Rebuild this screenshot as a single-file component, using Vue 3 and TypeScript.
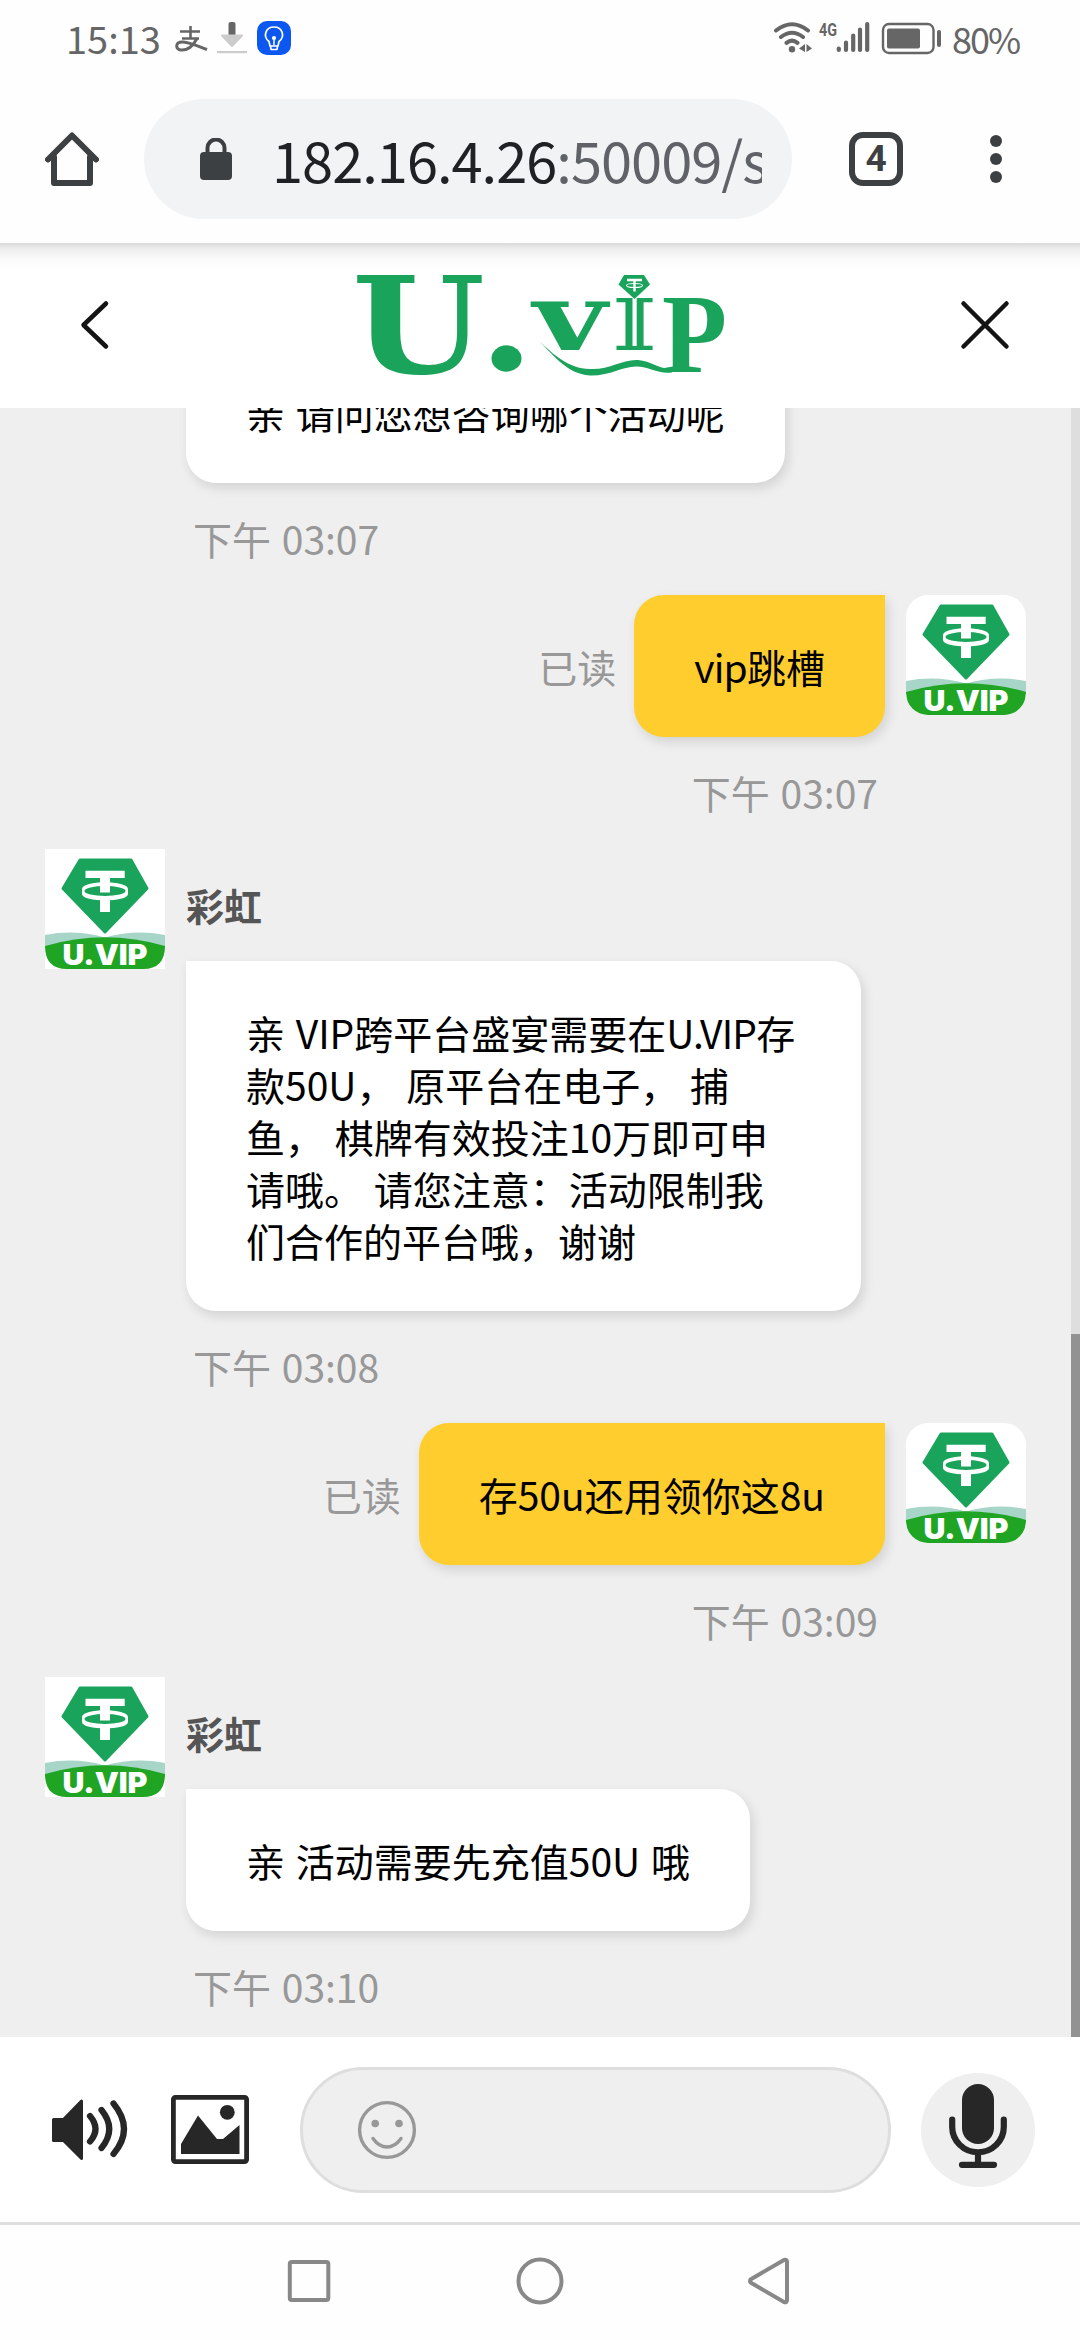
<script setup lang="ts">
interface Message {
  id: number
  mine: boolean
  name?: string
  lines: string[]
  time: string
}

const messages: Message[] = [
  { id: 1, mine: false, lines: ['亲 请问您想咨询哪个活动呢'], time: '下午 03:07' },
  { id: 2, mine: true, lines: ['vip跳槽'], time: '下午 03:07' },
  {
    id: 3,
    mine: false,
    name: '彩虹',
    lines: [
      '亲 VIP跨平台盛宴需要在U.VIP存',
      '款50U， 原平台在电子， 捕',
      '鱼， 棋牌有效投注10万即可申',
      '请哦。 请您注意：活动限制我',
      '们合作的平台哦，谢谢',
    ],
    time: '下午 03:08',
  },
  { id: 4, mine: true, lines: ['存50u还用领你这8u'], time: '下午 03:09' },
  { id: 5, mine: false, name: '彩虹', lines: ['亲 活动需要先充值50U 哦'], time: '下午 03:10' },
]

// Brand names are set tighter than the surrounding text.
const brand = /(U\.VIP|vip)/
const segments = (line: string): string[] => line.split(brand).filter(Boolean)
</script>

<template>
  <div class="screen">
    <svg class="defs" width="0" height="0" aria-hidden="true">
      <symbol id="avatar" viewBox="0 0 120 120">
        <rect width="120" height="120" fill="#fff" />
        <path d="M35 11H86L102 39.500L60 83L18 39.500Z" fill="#1aa35a" stroke="#1aa35a" stroke-width="3" stroke-linejoin="round" />
        <path d="M37 40C37 31 83 31 83 40V45C83 53.500 37 53.500 37 45Z" fill="#fff" />
        <ellipse cx="60" cy="42" rx="20.500" ry="5" fill="#1aa35a" />
        <path d="M40.500 21.700H79.700V29H65V43.500H55V29H40.500Z" fill="#fff" />
        <rect x="55" y="50" width="10" height="13" fill="#fff" />
        <path d="M0 86Q30 80 60 88.500Q90 80 120 86V99H0Z" fill="#a7d6c8" />
        <path d="M0 97Q60 79.500 120 97Q120 120 98 120H22Q0 120 0 97Z" fill="#1fa423" />
        <text x="17.500" y="115.500" class="avatar-word" textLength="85" lengthAdjust="spacingAndGlyphs">U.VIP</text>
      </symbol>
    </svg>

    <div class="status">
      <span class="clock">15:13</span>
      <svg class="pay" viewBox="175 25 33 28" width="33" height="28" fill="none" stroke="#666">
        <path d="M180 31.500H200M190.500 26V38M182 38.500H199" stroke-width="2.600" />
        <path d="M197 38.500C193 46 187 50.500 181 50C175 49.500 175 41.500 183 42C190 42.500 199 46.500 207 49.500" stroke-width="3" />
      </svg>
      <svg class="download" viewBox="216 21 32 33" width="32" height="33">
        <rect x="228.500" y="22" width="7" height="14" rx="2" fill="#666" />
        <path d="M222 35.500H242L232 46Z" fill="#ccc" stroke="#ccc" stroke-width="2" stroke-linejoin="round" />
        <rect x="217" y="51" width="30" height="2.200" fill="#ccc" />
      </svg>
      <svg class="bulb" viewBox="0 0 34 34" width="34" height="34">
        <rect width="34" height="34" rx="10" fill="#0b57f0" />
        <path d="M12 20.500C5.500 15.500 8.500 6 17 6S28.500 15.500 22 20.500L21 25H13ZM13.500 25L14 28.500H20L20.500 25" fill="none" stroke="#fff" stroke-width="1.700" stroke-linejoin="round" />
        <circle cx="17" cy="17" r="2.100" fill="#fff" /><path d="M17 17V24.500" stroke="#fff" stroke-width="1.500" />
      </svg>
      <span class="spring"></span>
      <svg class="signals" viewBox="773 20 170 36" width="170" height="36">
        <g fill="none" stroke="#666" stroke-width="4" stroke-linecap="round">
          <path d="M776 30.500Q792 18 808 30.500M781 37Q792 28.500 803 37M786.500 42.800Q792 38.500 797.500 42.800" />
        </g>
        <circle cx="792" cy="49.300" r="3.200" fill="#666" />
        <path d="M799 48.500L805 44V52ZM812 48.500L806.500 44V52Z" fill="#666" />
        <text x="819" y="35.500" class="net" textLength="18" lengthAdjust="spacingAndGlyphs">4G</text>
        <g stroke="#666" stroke-width="4.200" stroke-linecap="round">
          <path d="M838.800 48.500V50M846 42.500V50M853.200 35.500V50M860 29.500V50M867.200 24V50" />
        </g>
        <rect x="883" y="24" width="50.500" height="29" rx="6" fill="none" stroke="#666" stroke-width="2.400" />
        <rect x="887" y="28.500" width="33" height="20" rx="2" fill="#666" />
        <rect x="937" y="30" width="4" height="17" rx="2" fill="#666" />
      </svg>
      <span class="percent">80%</span>
    </div>

    <div class="toolbar">
      <svg class="home" viewBox="45 131 54 56" width="54" height="56" fill="none" stroke="#3c4043" stroke-width="6" stroke-linejoin="round" stroke-linecap="round">
        <path d="M48 159.500L72 135.500L96 159.500" /><path d="M54 157V183H90V157" />
      </svg>
      <div class="omnibox">
        <svg class="lock" viewBox="200 137 32 43" width="32" height="43">
          <rect x="200" y="151" width="32" height="28" rx="4" fill="#3c4043" />
          <path d="M207.500 152V147A8.500 8.500 0 0 1 224.500 147V152" fill="none" stroke="#3c4043" stroke-width="4" />
        </svg>
        <span class="url">182.16.4.26<span class="rest">:50009/s</span></span>
      </div>
      <div class="tabs">4</div>
      <div class="dots"><i></i><i></i><i></i></div>
    </div>

    <header class="header">
      <svg class="back" viewBox="80 300 30 50" width="30" height="50" fill="none" stroke="#141414" stroke-width="4.500" stroke-linecap="round" stroke-linejoin="round">
        <path d="M106 303.500L83.500 325L106 346.500" />
      </svg>
      <svg class="logo" viewBox="350 270 380 110" width="380" height="110" fill="#1aa35a">
        <text x="352" y="373" class="logo-u" textLength="133" lengthAdjust="spacingAndGlyphs">U</text>
        <ellipse cx="506.500" cy="358.500" rx="15" ry="13.200" />
        <text x="533" y="349.500" class="logo-v" textLength="74" lengthAdjust="spacingAndGlyphs">v</text>
        <text x="612" y="349.500" class="logo-i" textLength="45" lengthAdjust="spacingAndGlyphs">I</text>
        <rect x="632.500" y="298" width="4.200" height="48" fill="#fff" />
        <path d="M624 275H644L650 284.500L634.500 299L618.500 284.500Z" />
        <path d="M627 280H642M634.500 280V291.500" stroke="#fff" stroke-width="2.400" fill="none" />
        <ellipse cx="634.500" cy="285.500" rx="8" ry="2" fill="none" stroke="#fff" stroke-width="1.100" />
        <text x="662" y="372" class="logo-p" textLength="65" lengthAdjust="spacingAndGlyphs">P</text>
        <path d="M537 339C552 353 568 369 590 369C610 370 622 359 638 360C652 361 660 370 672 368.500V372.500C658 374.500 650 366.500 636 366.500C622 366.500 610 376 590 375.500C566 374 552 353 537 339Z" />
      </svg>
      <svg class="close" viewBox="960 300 50 50" width="50" height="50" stroke="#141414" stroke-width="4.500" stroke-linecap="round">
        <path d="M963.500 303.500L1006.500 346.500M1006.500 303.500L963.500 346.500" />
      </svg>
    </header>

    <main class="chat">
      <div class="thread">
        <section v-for="m in messages" :key="m.id" class="message" :class="{ mine: m.mine }">
          <div class="row">
            <svg v-if="m.mine || m.name" class="avatar" width="120" height="120"><use href="#avatar" /></svg>
            <div v-else class="avatar"></div>
            <div class="body">
              <div v-if="m.name" class="name">{{ m.name }}</div>
              <div class="bubble" :class="{ long: m.lines.length > 1 }">
                <p v-for="line in m.lines" :key="line"><span v-for="(s, i) in segments(line)" :key="i" :class="{ brand: brand.test(s) }">{{ s }}</span></p>
              </div>
            </div>
            <span v-if="m.mine" class="read">已读</span>
          </div>
          <div class="time">{{ m.time }}</div>
        </section>
      </div>
      <div class="track"><div class="thumb"></div></div>
    </main>

    <footer class="composer">
      <svg class="speaker" viewBox="51 2098 78 66" width="78" height="66">
        <path d="M53.500 2120.500H63.500L81.500 2102V2159.500L63.500 2141.500H53.500Z" fill="#272727" stroke="#272727" stroke-width="3" stroke-linejoin="round" />
        <path d="M90 2117Q101 2130 90 2142.500M101.500 2111Q117 2130 101.500 2149M113.500 2104.500Q134.500 2130 113.500 2155" fill="none" stroke="#272727" stroke-width="6.200" stroke-linecap="round" />
      </svg>
      <svg class="picture" viewBox="171 2095 78 69" width="78" height="69">
        <rect x="173.400" y="2097.400" width="73.200" height="64.200" rx="2" fill="none" stroke="#272727" stroke-width="4.800" />
        <circle cx="227.300" cy="2112.300" r="7.400" fill="#272727" />
        <path d="M181 2154V2144L198 2115.500L217 2139H223L239.500 2125V2154Z" fill="#272727" />
      </svg>
      <div class="input">
        <svg viewBox="357 2099 60 60" width="60" height="60" fill="none" stroke="#989898">
          <circle cx="387" cy="2129" r="27.400" stroke-width="3.400" />
          <path d="M373 2137.500Q379 2146 387 2146T401 2137.500" stroke-width="3.400" stroke-linecap="round" />
          <circle cx="375.200" cy="2122.500" r="3.800" fill="#989898" stroke="none" /><circle cx="399" cy="2122.500" r="3.800" fill="#989898" stroke="none" />
        </svg>
      </div>
      <div class="mic">
        <svg viewBox="948 2083 60 86" width="60" height="86">
          <rect x="962" y="2084" width="32" height="60" rx="16" fill="#272727" />
          <path d="M952.200 2119.500V2127A25.800 25.300 0 0 0 1003.800 2127V2119.500M978 2153V2164M962 2164.800H994" fill="none" stroke="#272727" stroke-width="6.200" stroke-linecap="round" />
        </svg>
      </div>
    </footer>

    <nav class="nav">
      <svg viewBox="280 2256 520 50" width="520" height="50" fill="none" stroke="#888" stroke-width="4" stroke-linejoin="round">
        <rect x="289.800" y="2262" width="38.500" height="38" rx="2" />
        <circle cx="540" cy="2281" r="21.500" />
        <path d="M750.500 2279.500Q749.500 2281 750.500 2282.500L784 2302Q787 2303 787 2300V2262Q787 2259 784 2260Z" />
      </svg>
    </nav>
  </div>
</template>

<style>
body { margin: 0; background: #fefefe; }
</style>

<style scoped>
.screen { width: 1080px; height: 2340px; overflow: hidden; display: flex; flex-direction: column; background: #fefefe; font-family: "Noto Sans CJK SC", "Noto Sans", sans-serif; }
.defs { position: absolute; }
svg { flex: none; display: block; }
.status { height: 75px; flex: none; display: flex; align-items: center; padding: 0 61px 0 66px; color: #666; }
.clock { font-size: 38px; line-height: 50px; width: 109px; }
.pay { margin: 2px 8px 0 0; }
.download { margin-right: 9px; }
.bulb { margin-top: 1px; }
.spring { flex: 1; }
.net { font: 700 18px Roboto, sans-serif; fill: #666; }
.percent { font-size: 36px; line-height: 50px; width: 67px; margin-left: 9px; letter-spacing: -2px; white-space: nowrap; margin-top: 1px; }
.toolbar { height: 168px; flex: none; display: flex; align-items: center; padding-left: 45px; box-sizing: border-box; }
.omnibox { margin-left: 45px; width: 648px; height: 120px; border-radius: 60px; background: #f1f3f4; display: flex; align-items: center; padding: 0 30px 0 56px; box-sizing: border-box; }
.url { margin-left: 40px; flex: 1; overflow: hidden; white-space: nowrap; font-size: 56px; line-height: 90px; letter-spacing: -1px; color: #202124; }
.rest { color: #5f6368; }
.tabs { margin-left: 57px; width: 54px; height: 54px; box-sizing: border-box; border: 6px solid #3c4043; border-radius: 14px; display: flex; align-items: center; justify-content: center; font: 700 37px/40px Roboto, sans-serif; color: #3c4043; }
.dots { margin-left: 87px; display: flex; flex-direction: column; gap: 6px; }
.dots i { width: 12px; height: 12px; border-radius: 50%; background: #3c4043; }
.header { height: 165px; flex: none; display: flex; align-items: center; box-sizing: border-box; padding: 0 70px 2px 80px; background: linear-gradient(#dadada, #eee 6px, #fafafa 16px, #fff 26px); }
.logo { margin-left: 240px; }
.close { margin-left: auto; }
.logo-u { font: 700 135px "DejaVu Serif", serif; }
.logo-v { font: 700 94px "DejaVu Serif", serif; }
.logo-i { font: 700 71px "DejaVu Serif", serif; }
.logo-p { font: 700 112px "Liberation Serif", serif; }
.avatar-word { font: 900 29px Inter, sans-serif; fill: #fff; }
.chat { height: 1629px; flex: none; overflow: hidden; background: #efefef; display: flex; }
.thread { flex: 1; padding: 0 45px; display: flex; flex-direction: column; justify-content: flex-end; }
.message { flex: none; }
.row { display: flex; align-items: flex-start; gap: 21px; }
.mine .row { flex-direction: row-reverse; }
.avatar { width: 120px; flex: none; }
.mine .avatar { border-radius: 22px; }
.mine .body { align-self: center; }
.name { height: 112px; box-sizing: border-box; padding-top: 30px; font-size: 38px; line-height: 52px; font-weight: 700; color: #555; }
.bubble { background: #fff; border-radius: 0 30px 30px 30px; padding: 45px 60px; width: max-content; box-shadow: 3px 5px 12px rgba(0, 0, 0, 0.12); color: #000; font-size: 39px; line-height: 52px; word-spacing: 2px; text-spacing-trim: space-all; }
.bubble.long { width: 555px; }
.bubble p { margin: 0; white-space: pre; }
.brand { letter-spacing: -0.8px; }
.mine .bubble { background: #ffcd2e; border-radius: 30px 0 30px 30px; }
.read { align-self: center; margin-right: -3px; font-size: 39px; line-height: 52px; color: #989898; }
.time { height: 112px; box-sizing: border-box; padding: 29px 0 0 148px; font-size: 39px; line-height: 52px; color: #989898; word-spacing: 2px; }
.message:last-child .time { height: 106px; }
.mine .time { text-align: right; padding: 29px 148px 0 0; }
.mine + .message:not(.mine) .avatar { border-radius: 0; }
.track { width: 9px; background: #dedede; display: flex; align-items: flex-end; }
.thumb { width: 9px; height: 703px; background: #929292; }
.composer { height: 188px; flex: none; box-sizing: border-box; border-bottom: 3px solid #dedede; display: flex; align-items: center; padding-left: 51px; background: #fff; }
.picture { margin-left: 42px; }
.input { margin-left: 51px; width: 591px; height: 126px; box-sizing: border-box; border: 3px solid #dedede; border-radius: 63px; background: #efefef; display: flex; align-items: center; padding-left: 54px; }
.mic { margin-left: 30px; width: 114px; height: 114px; border-radius: 50%; background: #efefef; display: flex; justify-content: center; padding-top: 10px; box-sizing: border-box; }
.nav { height: 112px; display: flex; align-items: center; padding-left: 280px; }
</style>
